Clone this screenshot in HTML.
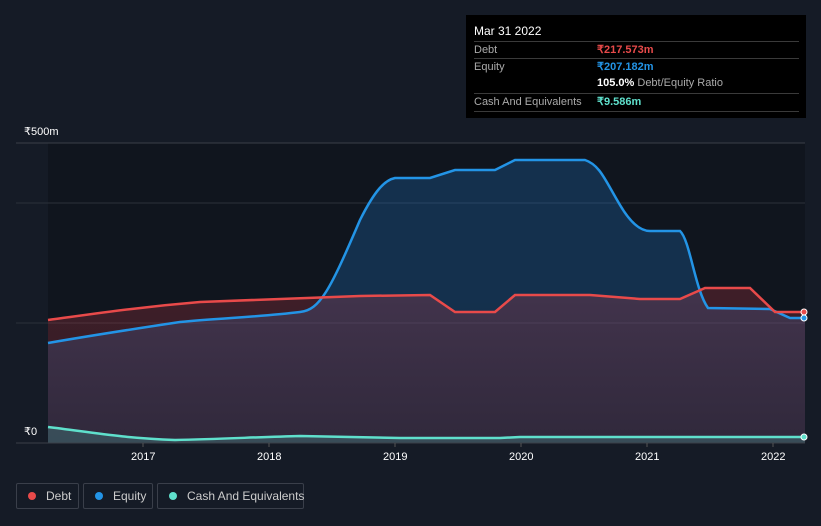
<!DOCTYPE html>
<html><head><meta charset="utf-8"><style>
body{margin:0;width:821px;height:526px;background:#151b26;font-family:"Liberation Sans",sans-serif;position:relative;overflow:hidden;color:#fff}
.t{position:absolute;font-size:11px}
.tip{position:absolute;left:466px;top:15px;width:340px;height:103px;background:#000}
.row{position:absolute;left:8px;width:325px;border-top:1px solid #3a3a3a;height:17px;font-size:11px;color:#aaa}
.leg{position:absolute;top:483px;height:26px;border:1px solid #3a3f4a;border-radius:2px;font-size:12px;color:#ccc;line-height:24px;box-sizing:border-box;white-space:nowrap}
.dot{display:inline-block;width:8px;height:8px;border-radius:50%;margin:0 10px 0 11px;vertical-align:0}
</style></head><body>
<svg width="821" height="526" style="position:absolute;left:0;top:0">
<defs><linearGradient id="g" x1="0" y1="0" x2="0" y2="1"><stop offset="0" stop-color="#10151e" stop-opacity="0"/><stop offset="1" stop-color="#10151e" stop-opacity="0.35"/></linearGradient></defs>
<rect x="48" y="143" width="757" height="300" fill="#10151e"/>
<line x1="16" y1="143" x2="805" y2="143" stroke="#3a3f48"/>
<line x1="16" y1="203" x2="805" y2="203" stroke="#2c313a"/>
<line x1="16" y1="323" x2="805" y2="323" stroke="#2c313a"/>
<path d="M48,343 C100,334 140,328 180,322 C220,318 260,317 300,312 C320,310 330,290 360,220 C375,190 385,180 395,178 L430,178 L455,170 L495,170 L515,160 L585,160 C600,165 605,180 620,205 C630,222 640,231 650,231 L680,231 C690,240 695,290 708,308 L770,309 L790,318 L805,318 L805,443 L48,443Z" fill="rgba(30,130,220,0.25)"/>
<path d="M48,320 C100,313 140,307 200,302 C250,300 300,298 360,296 L430,295 L455,312 L495,312 L515,295 L590,295 L640,299 L680,299 L705,288 L750,288 L775,312 L805,312 L805,443 L48,443Z" fill="rgba(200,60,70,0.25)"/>
<rect x="48" y="300" width="757" height="143" fill="url(#g)"/>
<path d="M48,343 C100,334 140,328 180,322 C220,318 260,317 300,312 C320,310 330,290 360,220 C375,190 385,180 395,178 L430,178 L455,170 L495,170 L515,160 L585,160 C600,165 605,180 620,205 C630,222 640,231 650,231 L680,231 C690,240 695,290 708,308 L770,309 L790,318 L805,318" fill="none" stroke="#2394e6" stroke-width="2.5"/>
<path d="M48,320 C100,313 140,307 200,302 C250,300 300,298 360,296 L430,295 L455,312 L495,312 L515,295 L590,295 L640,299 L680,299 L705,288 L750,288 L775,312 L805,312" fill="none" stroke="#e84a4a" stroke-width="2.5"/>
<path d="M48,427 C90,432 120,438 175,440 C220,439 260,437 300,436 L400,438 L500,438 L520,437 L805,437 L805,443 L48,443Z" fill="rgba(90,220,200,0.2)"/>
<path d="M48,427 C90,432 120,438 175,440 C220,439 260,437 300,436 L400,438 L500,438 L520,437 L805,437" fill="none" stroke="#5fe0cc" stroke-width="2.5"/>
<line x1="16" y1="443" x2="805" y2="443" stroke="#3a3f48"/>
<g stroke="#555"><line x1="143" y1="443" x2="143" y2="447"/><line x1="269" y1="443" x2="269" y2="447"/><line x1="395" y1="443" x2="395" y2="447"/><line x1="521" y1="443" x2="521" y2="447"/><line x1="647" y1="443" x2="647" y2="447"/><line x1="773" y1="443" x2="773" y2="447"/></g>
<circle cx="804" cy="312" r="3" fill="#e84a4a" stroke="#fff" stroke-width="1"/>
<circle cx="804" cy="318" r="3" fill="#2394e6" stroke="#fff" stroke-width="1"/>
<circle cx="804" cy="437" r="3" fill="#5fe0cc" stroke="#fff" stroke-width="1"/>
</svg>
<div class="t" style="left:24px;top:125px">₹500m</div>
<div class="t" style="left:24px;top:425px">₹0</div>
<div class="t" style="left:131px;top:451px">2017</div>
<div class="t" style="left:257px;top:451px">2018</div>
<div class="t" style="left:383px;top:451px">2019</div>
<div class="t" style="left:509px;top:451px">2020</div>
<div class="t" style="left:635px;top:451px">2021</div>
<div class="t" style="left:761px;top:451px">2022</div>
<div class="tip">
<div style="position:absolute;left:8px;top:9px;font-size:12px">Mar 31 2022</div>
<div class="row" style="top:26px;line-height:17px">Debt<span style="position:absolute;left:123px;color:#e84a4a;font-weight:bold">₹217.573m</span></div>
<div class="row" style="top:43px;line-height:17px">Equity<span style="position:absolute;left:123px;color:#2394e6;font-weight:bold">₹207.182m</span></div>
<div class="row" style="top:60px;line-height:17px;border-top:none"><span style="position:absolute;left:123px"><b style="color:#fff">105.0%</b> Debt/Equity Ratio</span></div>
<div class="row" style="top:78px;line-height:17px">Cash And Equivalents<span style="position:absolute;left:123px;color:#5fe0cc;font-weight:bold">₹9.586m</span></div>
<div class="row" style="top:96px;height:0"></div>
</div>
<div class="leg" style="left:16px;width:63px"><span class="dot" style="background:#e84a4a"></span>Debt</div>
<div class="leg" style="left:83px;width:70px"><span class="dot" style="background:#2394e6"></span>Equity</div>
<div class="leg" style="left:157px;width:147px"><span class="dot" style="background:#5fe0cc"></span>Cash And Equivalents</div>
</body></html>
